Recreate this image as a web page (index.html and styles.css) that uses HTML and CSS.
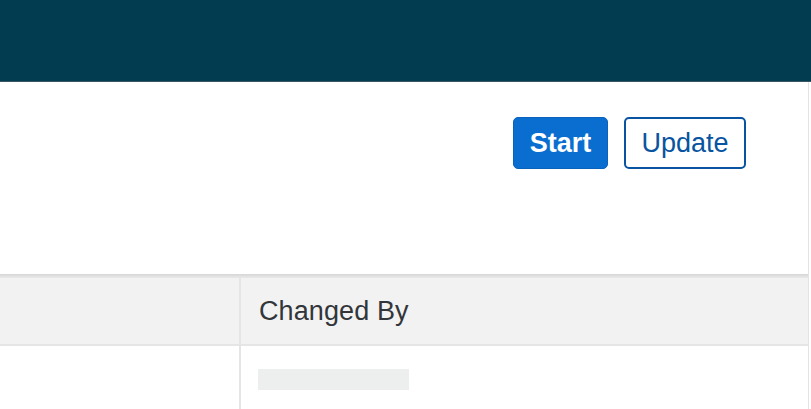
FILE: index.html
```html
<!DOCTYPE html>
<html lang="en">
<head>
<meta charset="utf-8">
<title>Process</title>
<link rel="stylesheet" href="styles.css">
</head>
<body>
<header class="shellbar"></header>
<main class="page">
  <section class="object-header">
    <div class="toolbar">
      <button class="btn btn-emph" type="button">Start</button>
      <button class="btn btn-ghost" type="button">Update</button>
    </div>
  </section>
  <div class="shadow"></div>
  <section class="table">
    <div class="row head">
      <div class="cell first"></div>
      <div class="cell second">Changed By</div>
    </div>
    <div class="row body">
      <div class="cell first"></div>
      <div class="cell second"><span class="skeleton"></span></div>
    </div>
  </section>
</main>
</body>
</html>
```

FILE: styles.css
```css
html, body {
  margin: 0;
  padding: 0;
  background: #ffffff;
  font-family: "Liberation Sans", Arial, sans-serif;
  color: #32363a;
  overflow: hidden;
}

.shellbar {
  height: 81px;
  background: #023c50;
  border-bottom: 1px solid #3a5666;
}

.page {
  width: 808px;
  border-right: 1px solid #e3e3e3;
  min-height: 327px;
}

.object-header {
  height: 192px;
  box-sizing: border-box;
  padding-top: 35px;
  padding-right: 62px;
}

.toolbar {
  display: flex;
  justify-content: flex-end;
  gap: 16px;
}

.btn {
  height: 52px;
  box-sizing: border-box;
  border-radius: 5px;
  font-family: "Liberation Sans", Arial, sans-serif;
  font-size: 26px;
  line-height: 1;
  padding: 0 14px;
  cursor: pointer;
}

.btn-emph {
  width: 95px;
  background: #0a6ed1;
  border: 1px solid #0a62ba;
  color: #ffffff;
  font-weight: bold;
  font-size: 27px;
}

.btn-ghost {
  width: 122px;
  background: #ffffff;
  border: 2px solid #0854a0;
  color: #0854a0;
  font-size: 27px;
}

.shadow {
  height: 4px;
  background: linear-gradient(#d6d6d6, #e9e9e9);
}

.row {
  display: flex;
}

.row.head {
  height: 66px;
  background: #f2f2f2;
  border-bottom: 2px solid #e5e5e5;
}

.row.body {
  height: 70px;
}

.cell {
  display: flex;
  align-items: center;
  box-sizing: border-box;
}

.cell.first {
  width: 241px;
  border-right: 2px solid #e5e5e5;
}

.cell.second {
  flex: 1;
  padding-left: 18px;
  font-size: 27px;
  letter-spacing: 0.1px;
  color: #32363a;
}

.row.body .cell.second {
  align-items: flex-start;
  padding-top: 23px;
  padding-left: 17px;
}

.skeleton {
  display: block;
  width: 151px;
  height: 21px;
  background: #edeeee;
}
```
